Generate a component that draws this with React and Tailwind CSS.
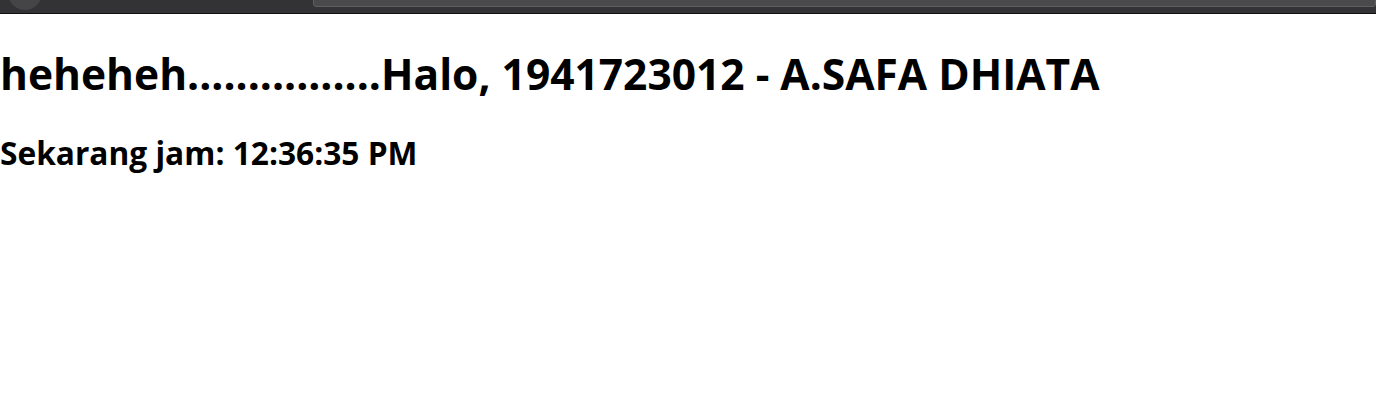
import React from 'react'

export default function App() {
  return (
    <div className="min-h-[400px] bg-white text-black">
      {/* browser chrome strip */}
      <div className="relative h-[14px] overflow-hidden border-b border-[#111] bg-[#333335]">
        <div className="absolute left-[8px] top-[-24px] h-[34px] w-[34px] rounded-full bg-[#454547]" />
        <div className="absolute left-[313px] right-0 top-[-20px] h-[27px] rounded-[3px] border border-[#5e5e60] bg-[#4a4a4c]" />
      </div>

      <div className="font-['Open_Sans',sans-serif] font-bold">
        <h1 className="mt-[35px] text-[42.5px] leading-[50px]">heheheh................Halo, 1941723012 - A.SAFA DHIATA</h1>
        <h2 className="mt-[35px] text-[31.7px] leading-[38px]">Sekarang jam: 12:36:35 PM</h2>
      </div>
    </div>
  )
}
